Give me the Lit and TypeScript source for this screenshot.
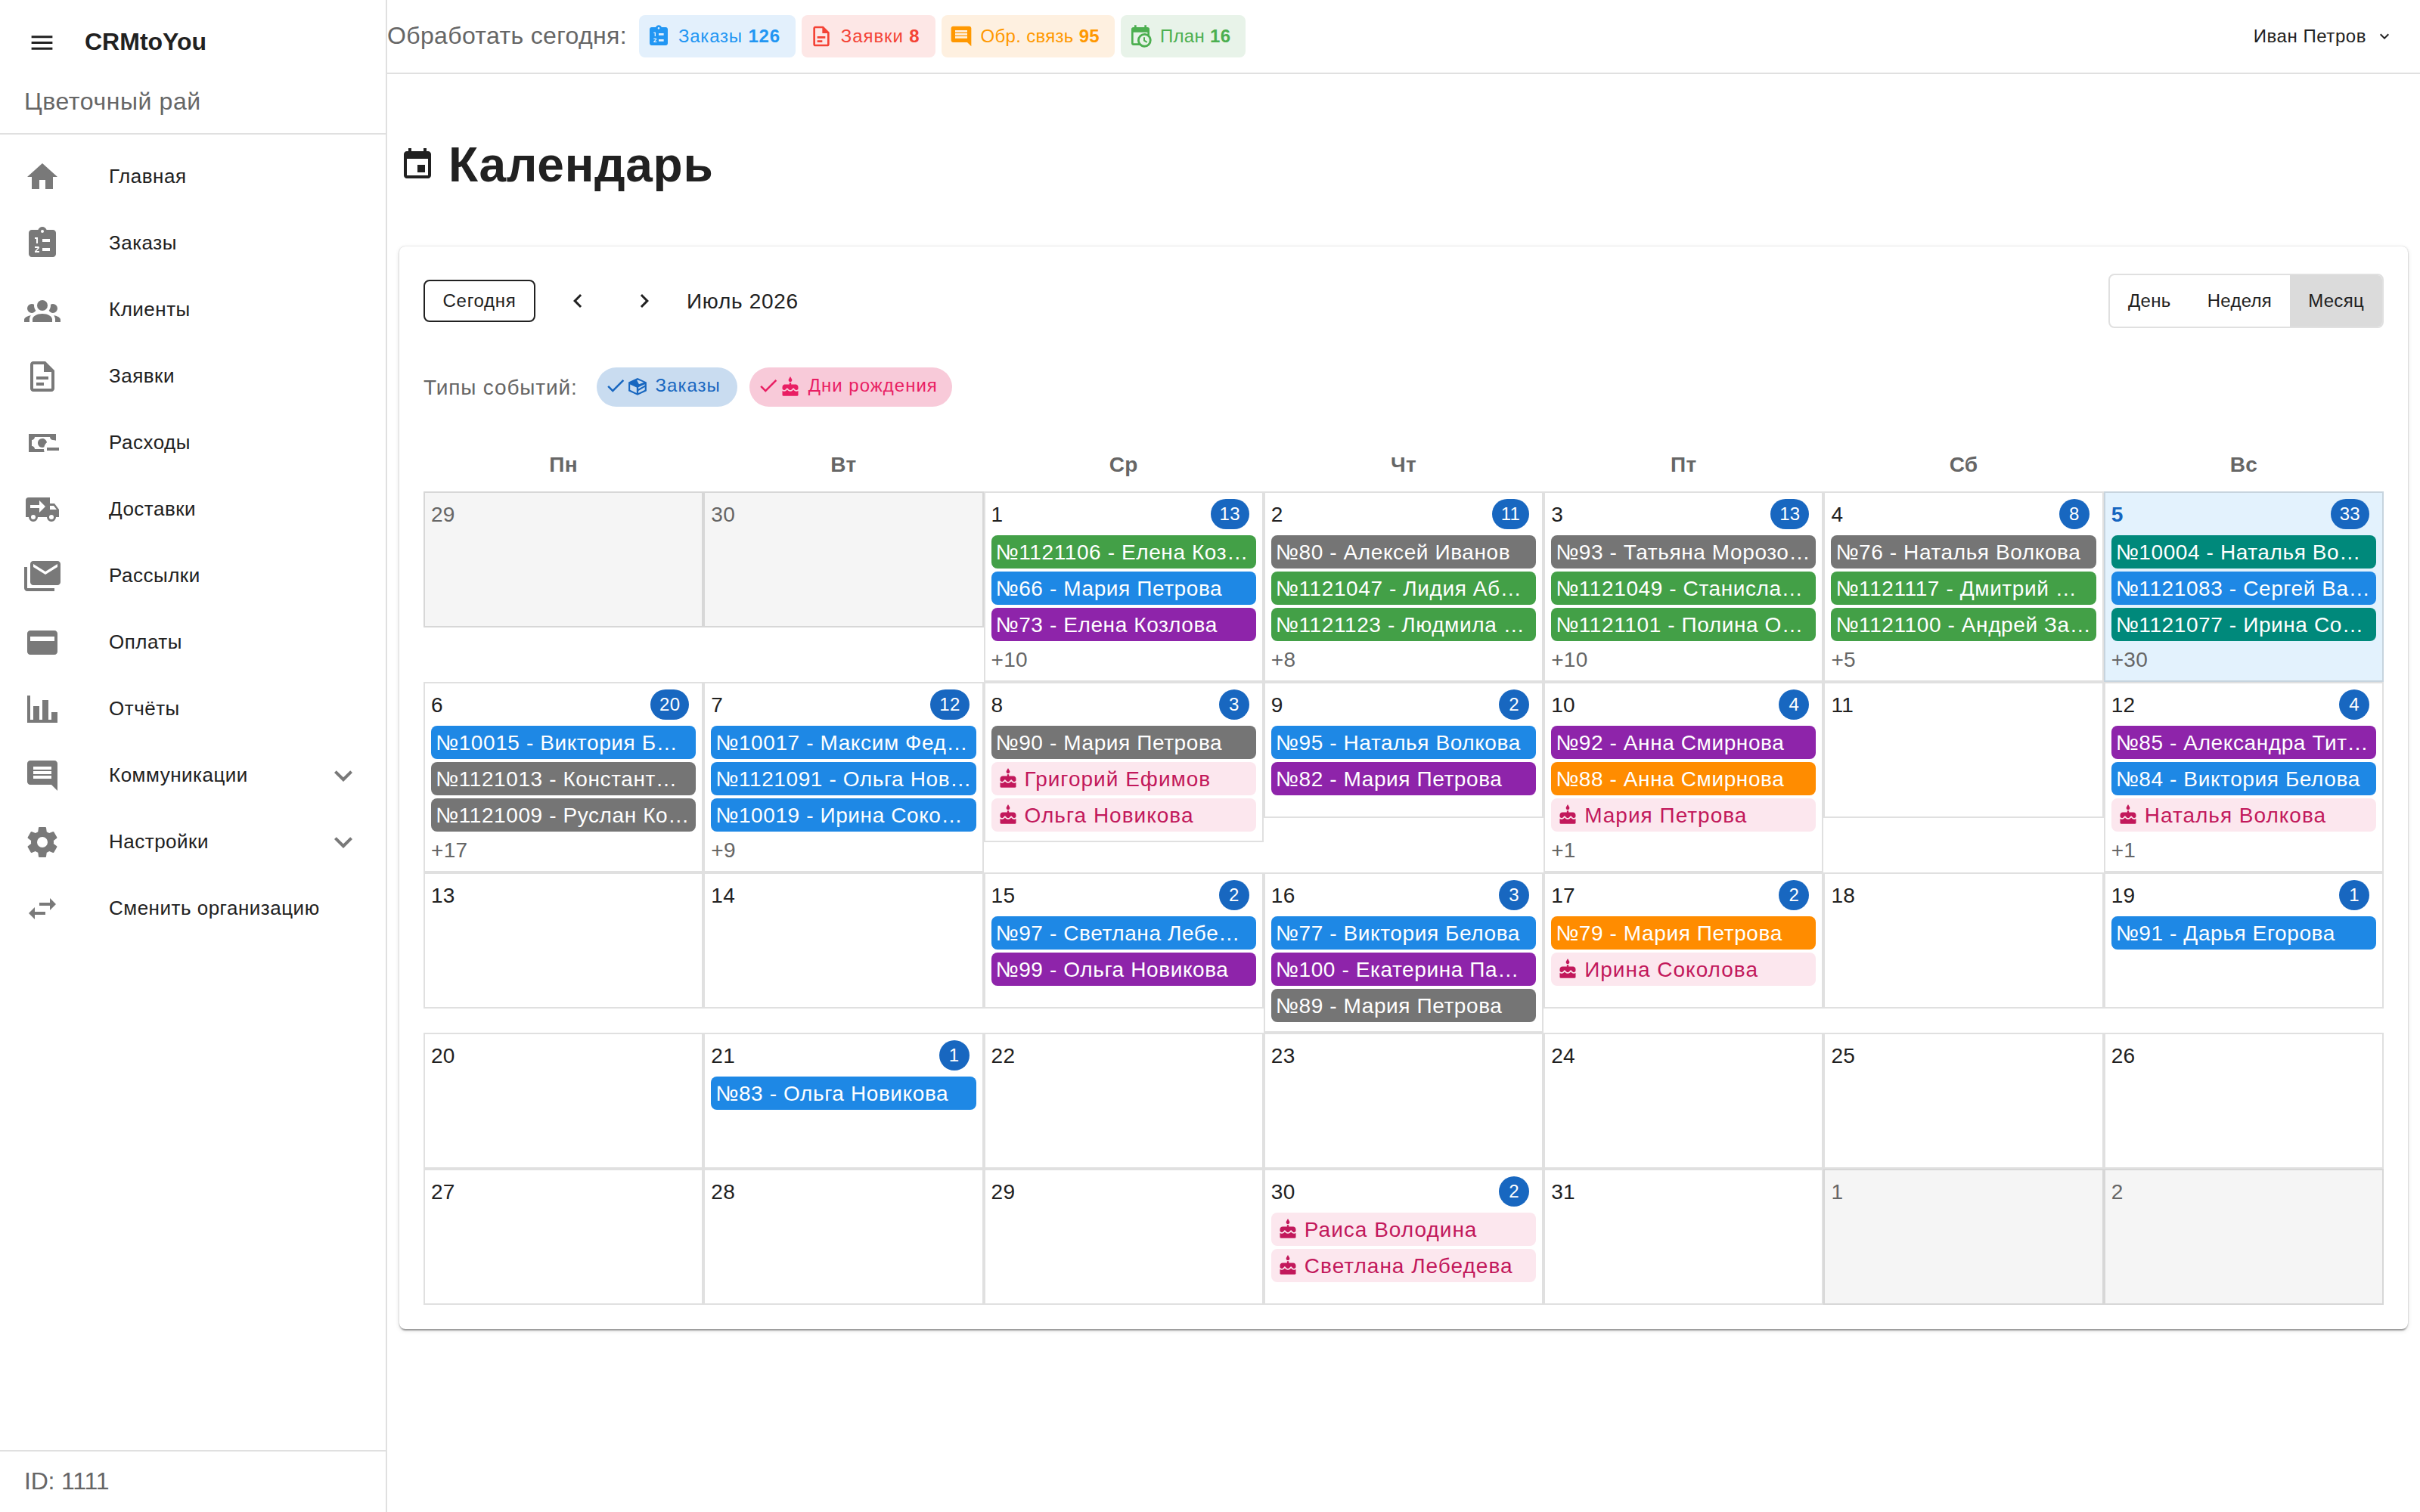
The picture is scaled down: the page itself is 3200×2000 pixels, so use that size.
import { LitElement, html, svg, css, nothing } from 'lit';
import { customElement, property } from 'lit/decorators.js';
import { classMap } from 'lit/directives/class-map.js';

const ICONS: Record<string, string> = {
    menu: 'M3 18h18v-2H3zm0-5h18v-2H3zm0-7v2h18V6z',
    home: 'M10 20v-6h4v6h5v-8h3L12 3 2 12h3v8z',
    orders: 'M19 3h-4.18C14.4 1.84 13.3 1 12 1s-2.4.84-2.82 2H5c-1.1 0-2 .9-2 2v14c0 1.1.9 2 2 2h14c1.1 0 2-.9 2-2V5c0-1.1-.9-2-2-2zm-7 0a1 1 0 1 1 0 2 1 1 0 0 1 0-2zM7 8h2v4H8V9H7zM12 9h5v2h-5zM12 15h5v2h-5zM10 17v1H7v-.92L9 15H7v-1h2.25c.41 0 .75.34.75.75 0 .2-.08.39-.21.52L8.12 17z',
    clients: 'M12 5.5A3.5 3.5 0 0 1 15.5 9A3.5 3.5 0 0 1 12 12.5A3.5 3.5 0 0 1 8.5 9A3.5 3.5 0 0 1 12 5.5M5 8C5.56 8 6.08 8.15 6.53 8.42C6.38 9.85 6.8 11.27 7.66 12.38C7.16 13.34 6.16 14 5 14A3 3 0 0 1 2 11A3 3 0 0 1 5 8M19 8A3 3 0 0 1 22 11A3 3 0 0 1 19 14C17.84 14 16.84 13.34 16.34 12.38C17.2 11.27 17.62 9.85 17.47 8.42C17.92 8.15 18.44 8 19 8M5.5 18.25C5.5 16.18 8.41 14.5 12 14.5C15.59 14.5 18.5 16.18 18.5 18.25V20H5.5V18.25M0 20V18.5C0 17.11 1.89 15.94 4.45 15.6C3.86 16.28 3.5 17.22 3.5 18.25V20H0M24 20H20.5V18.25C20.5 17.22 20.14 16.28 19.55 15.6C22.11 15.94 24 17.11 24 18.5V20Z',
    doc: 'M14 2H6c-1.1 0-2 .9-2 2v16c0 1.1.9 2 2 2h12c1.1 0 2-.9 2-2V8zM6 4h7v5h5v11H6zM8 12h8v2H8zM8 16h5v2H8z',
    cash: 'M15 15V17H23V15M14.97 11.61C14.85 10.28 13.59 8.97 12 9C10.3 9.03 9 10.3 9 12C9 13.7 10.3 14.94 12 15C12.38 15 12.77 14.92 13.14 14.77C13.41 13.67 13.86 12.63 14.97 11.61M13 16H7C7 14.9 6.1 14 5 14V10C6.1 10 7 9.1 7 8H17C17 9.1 17.9 10 19 10V10.06C19.67 10.06 20.34 10.18 21 10.4V6H3V18H13.32C13.1 17.33 13 16.66 13 16Z',
    truck: 'M3 4A2 2 0 0 0 1 6V17H3A3 3 0 0 0 6 20A3 3 0 0 0 9 17H15A3 3 0 0 0 18 20A3 3 0 0 0 21 17H23V12L20 8H17V4M10 6L14 10L10 14V11H4V9H10M17 9.5H19.5L21.47 12H17M6 15.5A1.5 1.5 0 0 1 7.5 17A1.5 1.5 0 0 1 6 18.5A1.5 1.5 0 0 1 4.5 17A1.5 1.5 0 0 1 6 15.5M18 15.5A1.5 1.5 0 0 1 19.5 17A1.5 1.5 0 0 1 18 18.5A1.5 1.5 0 0 1 16.5 17A1.5 1.5 0 0 1 18 15.5Z',
    mail: 'M0 6v14c0 1.1.9 2 2 2h18v-2H2V6zM22 2H6c-1.1 0-2 .9-2 2v12c0 1.1.9 2 2 2h16c1.1 0 2-.9 2-2V4c0-1.1-.9-2-2-2zm0 4l-8 5-8-5V4l8 5 8-5z',
    card: 'M20 4H4c-1.11 0-2 .89-2 2v12c0 1.11.89 2 2 2h16c1.11 0 2-.89 2-2V6c0-1.11-.89-2-2-2zm0 7H4V8h16z',
    chart: 'M22 21H2V3H4V19H6V10H10V19H12V6H16V19H18V14H22V21Z',
    comment: 'M22 4c0-1.1-.9-2-2-2H4c-1.1 0-2 .9-2 2v12c0 1.1.9 2 2 2h14l4 4zM18 14H6v-2h12zM18 11H6V9h12zM18 8H6V6h12z',
    cog: 'M12 15.5A3.5 3.5 0 0 1 8.5 12A3.5 3.5 0 0 1 12 8.5A3.5 3.5 0 0 1 15.5 12A3.5 3.5 0 0 1 12 15.5M19.43 12.97C19.47 12.65 19.5 12.33 19.5 12C19.5 11.67 19.47 11.34 19.43 11L21.54 9.37C21.73 9.22 21.78 8.95 21.66 8.73L19.66 5.27C19.54 5.05 19.27 4.96 19.05 5.05L16.56 6.05C16.04 5.66 15.5 5.32 14.87 5.07L14.5 2.42C14.46 2.18 14.25 2 14 2H10C9.75 2 9.54 2.18 9.5 2.42L9.13 5.07C8.5 5.32 7.96 5.66 7.44 6.05L4.95 5.05C4.73 4.96 4.46 5.05 4.34 5.27L2.34 8.73C2.21 8.95 2.27 9.22 2.46 9.37L4.57 11C4.53 11.34 4.5 11.67 4.5 12C4.5 12.33 4.53 12.65 4.57 12.97L2.46 14.63C2.27 14.78 2.21 15.05 2.34 15.27L4.34 18.73C4.46 18.95 4.73 19.03 4.95 18.95L7.44 17.94C7.96 18.34 8.5 18.68 9.13 18.93L9.5 21.58C9.54 21.82 9.75 22 10 22H14C14.25 22 14.46 21.82 14.5 21.58L14.87 18.93C15.5 18.67 16.04 18.34 16.56 17.94L19.05 18.95C19.27 19.03 19.54 18.95 19.66 18.73L21.66 15.27C21.78 15.05 21.73 14.78 21.54 14.63L19.43 12.97Z',
    swap: 'M6.99 11 3 15l3.99 4v-3H14v-2H6.99zM21 9l-3.99-4v3H10v2h7.01v3z',
    down: 'M7.41 8.59 12 13.17l4.59-4.58L18 10l-6 6-6-6z',
    left: 'M15.41 7.41 14 6l-6 6 6 6 1.41-1.41L10.83 12z',
    right: 'M10 6 8.59 7.41 13.17 12l-4.58 4.59L10 18l6-6z',
    event: 'M17 12h-5v5h5zM16 1v2H8V1H6v2H5c-1.11 0-2 .9-2 2v14c0 1.1.89 2 2 2h14c1.1 0 2-.9 2-2V5c0-1.1-.9-2-2-2h-1V1zm3 18H5V8h14z',
    plan: 'M15 13H16.5V15.82L18.94 17.23L18.19 18.53L15 16.69V13M19 8H5V19H9.67C9.24 18.09 9 17.07 9 16A7 7 0 0 1 16 9C17.07 9 18.09 9.24 19 9.67V8M5 21C3.89 21 3 20.1 3 19V5C3 3.89 3.89 3 5 3H6V1H8V3H16V1H18V3H19A2 2 0 0 1 21 5V11.1C22.24 12.36 23 14.09 23 16A7 7 0 0 1 16 23C14.09 23 12.36 22.24 11.1 21H5M16 11.15A4.85 4.85 0 0 0 11.15 16C11.15 18.68 13.32 20.85 16 20.85A4.85 4.85 0 0 0 20.85 16C20.85 13.32 18.68 11.15 16 11.15Z',
    check: 'M9 16.17 4.83 12l-1.42 1.41L9 19 21 7l-1.41-1.41z',
    box: 'M12 1.7 22.2 6.4v10L12 21.2 1.8 16.4v-10zM12.3 3.8l-1 .5 2.4 4.4 5.4-2zM3.6 9v6.2l7.4 3.6v-6.3zM13 12.3v1.9l7.2-4.1V8.8zM13 16.2v2.6l7.3-3.6v-3.1z',
    cake: 'M12 6c1.11 0 2-.9 2-2 0-.38-.1-.73-.29-1.03L12 0l-1.71 2.97c-.19.3-.29.65-.29 1.03 0 1.1.9 2 2 2zm4.6 9.99-1.07-1.07-1.08 1.07c-1.3 1.3-3.58 1.31-4.89 0l-1.07-1.07-1.09 1.07C6.75 16.64 5.88 17 4.96 17c-.73 0-1.4-.23-1.96-.61V21c0 .55.45 1 1 1h16c.55 0 1-.45 1-1v-4.61c-.56.38-1.23.61-1.96.61-.92 0-1.79-.36-2.44-1.01zM18 9h-5V7h-2v2H6c-1.66 0-3 1.34-3 3v1.54c0 1.08.88 1.96 1.96 1.96.52 0 1.02-.2 1.38-.57l2.14-2.13 2.13 2.13c.74.74 2.03.74 2.77 0l2.14-2.13 2.13 2.13c.37.37.86.57 1.38.57 1.08 0 1.96-.88 1.96-1.96V12C21 10.34 19.66 9 18 9z',
};

const NAV: [string, string, boolean?][] = [
    ['home', 'Главная'],
    ['orders', 'Заказы'],
    ['clients', 'Клиенты'],
    ['doc', 'Заявки'],
    ['cash', 'Расходы'],
    ['truck', 'Доставки'],
    ['mail', 'Рассылки'],
    ['card', 'Оплаты'],
    ['chart', 'Отчёты'],
    ['comment', 'Коммуникации', true],
    ['cog', 'Настройки', true],
    ['swap', 'Сменить организацию'],
];

const COUNTERS: [string, string, string, number][] = [
    ['blue', 'orders', 'Заказы', 126],
    ['red', 'doc', 'Заявки', 8],
    ['orange', 'comment', 'Обр. связь', 95],
    ['green', 'plan', 'План', 16],
];

type Kind = 'green' | 'blue' | 'purple' | 'gray' | 'orange' | 'teal' | 'bday';

interface Day {
    n: number;
    count?: number;
    events?: [Kind, string][];
    more?: number;
    other?: boolean;
    today?: boolean;
}

const WEEKDAYS = ['Пн', 'Вт', 'Ср', 'Чт', 'Пт', 'Сб', 'Вс'];

const DAYS: Day[] = [
    { n: 29, other: true },
    { n: 30, other: true },
    { n: 1, count: 13, more: 10, events: [['green', '№1121106 - Елена Коз…'], ['blue', '№66 - Мария Петрова'], ['purple', '№73 - Елена Козлова']] },
    { n: 2, count: 11, more: 8, events: [['gray', '№80 - Алексей Иванов'], ['green', '№1121047 - Лидия Аб…'], ['green', '№1121123 - Людмила …']] },
    { n: 3, count: 13, more: 10, events: [['gray', '№93 - Татьяна Морозо…'], ['green', '№1121049 - Станисла…'], ['green', '№1121101 - Полина О…']] },
    { n: 4, count: 8, more: 5, events: [['gray', '№76 - Наталья Волкова'], ['green', '№1121117 - Дмитрий …'], ['green', '№1121100 - Андрей За…']] },
    { n: 5, today: true, count: 33, more: 30, events: [['teal', '№10004 - Наталья Во…'], ['blue', '№1121083 - Сергей Ва…'], ['teal', '№1121077 - Ирина Со…']] },
    { n: 6, count: 20, more: 17, events: [['blue', '№10015 - Виктория Б…'], ['gray', '№1121013 - Констант…'], ['gray', '№1121009 - Руслан Ко…']] },
    { n: 7, count: 12, more: 9, events: [['blue', '№10017 - Максим Фед…'], ['blue', '№1121091 - Ольга Нов…'], ['blue', '№10019 - Ирина Соко…']] },
    { n: 8, count: 3, events: [['gray', '№90 - Мария Петрова'], ['bday', 'Григорий Ефимов'], ['bday', 'Ольга Новикова']] },
    { n: 9, count: 2, events: [['blue', '№95 - Наталья Волкова'], ['purple', '№82 - Мария Петрова']] },
    { n: 10, count: 4, more: 1, events: [['purple', '№92 - Анна Смирнова'], ['orange', '№88 - Анна Смирнова'], ['bday', 'Мария Петрова']] },
    { n: 11 },
    { n: 12, count: 4, more: 1, events: [['purple', '№85 - Александра Тит…'], ['blue', '№84 - Виктория Белова'], ['bday', 'Наталья Волкова']] },
    { n: 13 },
    { n: 14 },
    { n: 15, count: 2, events: [['blue', '№97 - Светлана Лебе…'], ['purple', '№99 - Ольга Новикова']] },
    { n: 16, count: 3, events: [['blue', '№77 - Виктория Белова'], ['purple', '№100 - Екатерина Па…'], ['gray', '№89 - Мария Петрова']] },
    { n: 17, count: 2, events: [['orange', '№79 - Мария Петрова'], ['bday', 'Ирина Соколова']] },
    { n: 18 },
    { n: 19, count: 1, events: [['blue', '№91 - Дарья Егорова']] },
    { n: 20 },
    { n: 21, count: 1, events: [['blue', '№83 - Ольга Новикова']] },
    { n: 22 },
    { n: 23 },
    { n: 24 },
    { n: 25 },
    { n: 26 },
    { n: 27 },
    { n: 28 },
    { n: 29 },
    { n: 30, count: 2, events: [['bday', 'Раиса Володина'], ['bday', 'Светлана Лебедева']] },
    { n: 31 },
    { n: 1, other: true },
    { n: 2, other: true },
];

@customElement('crm-icon')
export class CrmIcon extends LitElement {
    static override styles = css`
    :host { display: inline-flex; flex: none; width: 48px; height: 48px; }
    svg { width: 100%; height: 100%; fill: currentColor; }
  `;

    @property() name = '';

    override render() {
        return html`<svg viewBox="0 0 24 24">${svg`<path fill-rule="evenodd" d=${ICONS[this.name] ?? ''}></path>`}</svg>`;
    }
}

@customElement('calendar-day')
export class CalendarDay extends LitElement {
    static override styles = css`
    :host { display: block; min-width: 0; }

    .cell {
      box-sizing: border-box;
      min-height: 180px;
      padding: 8px;
      border: 2px solid rgba(0, 0, 0, 0.12);
    }
    .cell.other { background: #f5f5f5; color: #666; }
    .cell.today { background: #e3f2fd; }
    .today .num { color: #1565c0; font-weight: 700; }

    .head {
      display: flex; align-items: center; justify-content: space-between;
      height: 40px; padding-right: 9px; margin-bottom: 8px;
    }
    .num { padding-top: 1px; }
    .count {
      box-sizing: border-box; min-width: 40px; height: 40px;
      padding: 0 12px; border-radius: 20px;
      background: #1867c0; color: #fff;
      font-size: 24px; line-height: 40px; text-align: center;
    }

    .event {
      display: flex; align-items: center; gap: 8px;
      height: 44px; padding: 0 6px; margin-bottom: 4px;
      border-radius: 8px; color: #fff;
      letter-spacing: 0.6px;
      white-space: nowrap; overflow: hidden;
    }
    .event span { padding-top: 2px; }
    .event crm-icon { width: 28px; height: 28px; }
    .green { background: #43a047; }
    .blue { background: #1e88e5; }
    .purple { background: #8e24aa; }
    .gray { background: #757575; }
    .orange { background: #ff8c00; }
    .teal { background: #00897b; }
    .bday { padding: 0 8px; background: #fce7ee; color: #c2185b; letter-spacing: 1px; }

    .more { height: 40px; line-height: 42px; color: #666; }
  `;

    @property({ attribute: false }) day!: Day;

    override render() {
        const { n, count, events = [], more, other, today } = this.day;

        return html`
      <div class=${classMap({ cell: true, other: !!other, today: !!today })}>
        <div class="head">
          <span class="num">${n}</span>
          ${count ? html`<span class="count">${count}</span>` : nothing}
        </div>
        ${events.map(([kind, text]) => html`
          <div class="event ${kind}">
            ${kind === 'bday' ? html`<crm-icon name="cake"></crm-icon>` : nothing}
            <span>${text}</span>
          </div>`)}
        ${more ? html`<div class="more">+${more}</div>` : nothing}
      </div>
    `;
    }
}

@customElement('app-root')
export class AppRoot extends LitElement {
    static override styles = css`
    :host {
      display: flex; width: 3200px; height: 2000px;
      background: #fff; color: #212121;
      font-family: "Liberation Sans", Arial, sans-serif;
      font-size: 28px; letter-spacing: 0.3px;
    }

    .sidebar {
      box-sizing: border-box; flex: none; width: 512px;
      display: flex; flex-direction: column;
      border-right: 2px solid #e0e0e0;
    }
    .brand { height: 176px; border-bottom: 2px solid #e0e0e0; }
    .brand-row { display: flex; align-items: center; height: 112px; padding-left: 37px; }
    .brand-row crm-icon { width: 37px; height: 37px; }
    .logo { margin-left: 38px; font-size: 32px; font-weight: 700; letter-spacing: 0; line-height: 36px; padding-bottom: 2px; }
    .org { padding-left: 32px; font-size: 32px; letter-spacing: 0.6px; line-height: 45px; color: #666; }

    nav { flex: 1; padding-top: 12px; }
    .nav-item { display: flex; align-items: center; height: 88px; padding: 0 32px; color: #797979; }
    .nav-label { flex: 1; margin-left: 64px; padding-bottom: 2px; font-size: 26px; letter-spacing: 0.5px; color: #212121; }
    .org-id { height: 80px; border-top: 2px solid #e0e0e0; padding-left: 32px; line-height: 79px; font-size: 32px; letter-spacing: -0.2px; color: #666; }

    .main { flex: 1; min-width: 0; }
    .topbar {
      display: flex; align-items: center; gap: 8px;
      height: 96px; border-bottom: 2px solid #e0e0e0;
    }
    .today-label { margin-right: 8px; padding-bottom: 1px; font-size: 32px; letter-spacing: 0.35px; color: #666; }
    .counter {
      display: flex; align-items: center; gap: 10px;
      box-sizing: border-box; height: 56px; padding: 0 20px 0 10px;
      border-radius: 8px; font-size: 24px;
    }
    .counter crm-icon { width: 32px; height: 32px; }
    .counter.blue { color: #2196f3; background: #e3f0fc; letter-spacing: 0.8px; }
    .counter.red { color: #f44336; background: #fde7e6; letter-spacing: 0.9px; }
    .counter.orange { color: #ff9800; background: #fef0e0; }
    .counter.green { color: #4caf50; background: #e8f3e9; }
    .user { display: flex; align-items: center; gap: 12px; margin-left: auto; padding-right: 35px; font-size: 24px; letter-spacing: 0.55px; }
    .user crm-icon { width: 24px; height: 24px; }

    h1 {
      display: flex; align-items: center; gap: 17px;
      height: 80px; margin: 80px 0 68px; padding-left: 16px;
      font-size: 64px; letter-spacing: 0.7px;
    }

    .card {
      margin: 0 16px; padding: 32px; border-radius: 8px;
      box-shadow: 0 4px 2px -2px rgba(0, 0, 0, 0.2), 0 2px 2px rgba(0, 0, 0, 0.14), 0 2px 6px rgba(0, 0, 0, 0.12), 0 0 2px rgba(0, 0, 0, 0.2);
    }
    .toolbar { display: flex; align-items: center; height: 80px; }
    .btn-today {
      box-sizing: border-box; width: 148px; height: 56px; margin-right: 16px;
      border: 2px solid #212121; border-radius: 8px;
      font-size: 24px; letter-spacing: 0.7px; line-height: 52px; text-align: center;
    }
    .arrow { display: flex; align-items: center; justify-content: center; width: 80px; height: 80px; margin-right: 8px; }
    .arrow crm-icon { width: 36px; height: 36px; }
    .period { margin-left: 8px; padding-top: 1px; letter-spacing: 0.7px; }
    .views { display: flex; margin-left: auto; border: 2px solid #e0e0e0; border-radius: 8px; font-size: 24px; line-height: 68px; }
    .view { padding: 0 24px; }
    .view.active { background: #dbdbdb; border-radius: 0 6px 6px 0; }

    .filters { display: flex; align-items: center; gap: 16px; height: 52px; margin-top: 48px; }
    .filters-label { margin-right: 9px; padding-top: 1px; letter-spacing: 0.85px; color: #666; }
    .chip {
      display: flex; align-items: center; box-sizing: border-box;
      height: 52px; padding: 0 22px 4px 10px; border-radius: 26px; font-size: 24px; letter-spacing: 1px;
    }
    .chip .tick { width: 30px; height: 30px; }
    .chip .kind { width: 28px; height: 28px; margin: 4px 10px 0 0; }
    .chip.blue { background: #c9dcf0; color: #1867c0; }
    .chip.pink { padding-right: 19px; background: #f8cad9; color: #e91e63; }

    .weekdays, .grid { display: grid; grid-template-columns: repeat(7, 1fr); }
    .weekdays { margin-top: 40px; padding: 17px 0 15px; line-height: 40px; font-weight: 700; text-align: center; color: #666; }
  `;

    override render() {
        return html`
      <aside class="sidebar">
        <div class="brand">
          <div class="brand-row">
            <crm-icon name="menu"></crm-icon>
            <div class="logo">CRMtoYou</div>
          </div>
          <div class="org">Цветочный рай</div>
        </div>
        <nav>
          ${NAV.map(([icon, label, open]) => html`
            <div class="nav-item">
              <crm-icon name=${icon}></crm-icon>
              <span class="nav-label">${label}</span>
              ${open ? html`<crm-icon name="down"></crm-icon>` : nothing}
            </div>`)}
        </nav>
        <div class="org-id">ID: 1111</div>
      </aside>
      <div class="main">
        <header class="topbar">
          <span class="today-label">Обработать сегодня:</span>
          ${COUNTERS.map(([color, icon, label, n]) => html`
            <div class="counter ${color}">
              <crm-icon name=${icon}></crm-icon>
              <span>${label} <b>${n}</b></span>
            </div>`)}
          <div class="user">Иван Петров<crm-icon name="down"></crm-icon></div>
        </header>
        <h1><crm-icon name="event"></crm-icon>Календарь</h1>
        <section class="card">
          <div class="toolbar">
            <div class="btn-today">Сегодня</div>
            <div class="arrow"><crm-icon name="left"></crm-icon></div>
            <div class="arrow"><crm-icon name="right"></crm-icon></div>
            <div class="period">Июль 2026</div>
            <div class="views">
              <div class="view">День</div>
              <div class="view">Неделя</div>
              <div class="view active">Месяц</div>
            </div>
          </div>
          <div class="filters">
            <span class="filters-label">Типы событий:</span>
            <div class="chip blue">
              <crm-icon class="tick" name="check"></crm-icon>
              <crm-icon class="kind" name="box"></crm-icon>Заказы
            </div>
            <div class="chip pink">
              <crm-icon class="tick" name="check"></crm-icon>
              <crm-icon class="kind" name="cake"></crm-icon>Дни рождения
            </div>
          </div>
          <div class="weekdays">${WEEKDAYS.map(d => html`<div>${d}</div>`)}</div>
          <div class="grid">${DAYS.map(d => html`<calendar-day .day=${d}></calendar-day>`)}</div>
        </section>
      </div>
    `;
    }
}

declare global {
    interface HTMLElementTagNameMap {
        'app-root': AppRoot;
        'calendar-day': CalendarDay;
        'crm-icon': CrmIcon;
    }
}
